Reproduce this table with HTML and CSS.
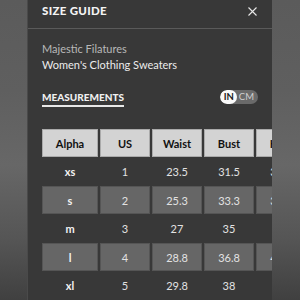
FILE: index.html
```html
<!DOCTYPE html>
<html lang="en">
<head>
<meta charset="utf-8">
<title>Size Guide</title>
<link rel="stylesheet" href="styles.css">
</head>
<body>
<div class="page">
  <div class="panel">
    <header class="head">
      <h1 class="title">SIZE GUIDE</h1>
      <svg class="close" width="9" height="9" viewBox="0 0 9 9"><path d="M0.5 0.5L8.5 8.5M8.5 0.5L0.5 8.5" stroke="#e8e8e8" stroke-width="1.1" fill="none"/></svg>
    </header>
    <div class="body">
      <p class="brand">Majestic Filatures</p>
      <p class="cat">Women's Clothing Sweaters</p>
      <div class="tabs">
        <span class="tab">MEASUREMENTS</span>
        <div class="toggle"><span class="opt on">IN</span><span class="opt">CM</span></div>
      </div>
      <div class="table">
        <div class="row hdr">
          <div class="c first">Alpha</div><div class="c">US</div><div class="c">Waist</div><div class="c">Bust</div><div class="c">Hips</div>
        </div>
        <div class="row odd">
          <div class="c first">xs</div><div class="c">1</div><div class="c">23.5</div><div class="c">31.5</div><div class="c">33.5</div>
        </div>
        <div class="row even">
          <div class="c first">s</div><div class="c">2</div><div class="c">25.3</div><div class="c">33.3</div><div class="c">35.3</div>
        </div>
        <div class="row odd">
          <div class="c first">m</div><div class="c">3</div><div class="c">27</div><div class="c">35</div><div class="c">37</div>
        </div>
        <div class="row even">
          <div class="c first">l</div><div class="c">4</div><div class="c">28.8</div><div class="c">36.8</div><div class="c">40.8</div>
        </div>
        <div class="row odd">
          <div class="c first">xl</div><div class="c">5</div><div class="c">29.8</div><div class="c">38</div><div class="c">42</div>
        </div>
      </div>
    </div>
  </div>
</div>
</body>
</html>
```
FILE: styles.css
```css
html, body {
  margin: 0;
  padding: 0;
  width: 300px;
  height: 300px;
  overflow: hidden;
}
body {
  font-family: Lato, "Liberation Sans", sans-serif;
  background: #555;
}
.page {
  width: 300px;
  height: 300px;
  display: flex;
  justify-content: center;
  background: linear-gradient(180deg, #5b5b5b 0%, #5f5f5f 30%, #676767 55%, #555 80%, #404040 100%);
}
.panel {
  width: 244px;
  height: 300px;
  background: #383838;
  overflow: hidden;
  box-shadow: -1px 0 0 #4a4a4a;
}
.head {
  height: 29px;
  border-bottom: 1px solid #5a5a5a;
  display: flex;
  align-items: center;
  justify-content: space-between;
  padding: 0 15px 6px 14px;
  box-sizing: border-box;
}
.title {
  margin: 0;
  font-size: 11.5px;
  line-height: 14px;
  font-weight: 900;
  letter-spacing: 0.3px;
  color: #f4f4f4;
}
.close { display: block; }
.body {
  padding: 12px 0 0 14px;
}
.brand, .cat {
  margin: 0;
  font-size: 11px;
  line-height: 16px;
}
.brand { color: #b8b8b8; }
.cat { color: #ececec; }
.tabs {
  margin-top: 13px;
  display: flex;
  align-items: center;
  justify-content: space-between;
  padding-right: 14px;
  height: 21px;
}
.tab {
  font-size: 10px;
  font-weight: 900;
  letter-spacing: 0;
  color: #f0f0f0;
  padding: 4px 0 2px;
  border-bottom: 2px solid #e8e8e8;
}
.toggle {
  display: flex;
  height: 14px;
  border-radius: 7px;
  background: #6a6a6a;
  overflow: hidden;
  margin-top: 1px;
}
.opt {
  font-size: 9.5px;
  line-height: 14px;
  color: #cfcfcf;
  padding: 0 4px 0 2px;
}
.opt.on {
  background: #fafafa;
  color: #1a1a1a;
  border-radius: 7px;
  padding: 0 3px 0 4px;
  font-weight: 700;
}
.table {
  margin-top: 22px;
  width: max-content;
}
.row {
  display: grid;
  grid-template-columns: 56px repeat(4, 50px);
  column-gap: 2px;
}
.row.hdr .c { height: 28px; background: #d3d3d3; color: #111; font-weight: 700; box-shadow: inset 0 0 0 1px #aaa; }
.row:nth-child(2) .c, .row:nth-child(4) .c { height: 29px; }
.row:nth-child(3) .c, .row:nth-child(5) .c, .row:nth-child(6) .c { height: 28px; }
.row.even .c { background: #666; box-shadow: inset 0 0 0 1px #555; }
.c {
  display: flex;
  align-items: center;
  justify-content: center;
  font-size: 11px;
  color: #e2e2e2;
}
.c.first { font-weight: 700; color: #f2f2f2; }
.row.hdr .c.first { color: #111; }
```
